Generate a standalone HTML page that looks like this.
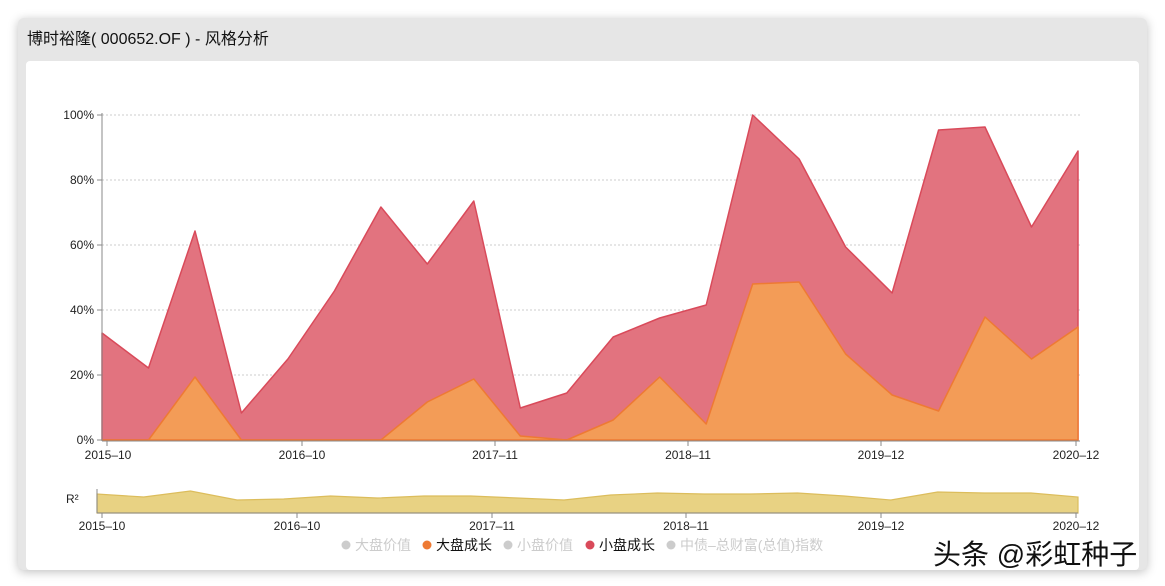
<!DOCTYPE html>
<html><head><meta charset="utf-8"><style>
body{margin:0;width:1165px;height:586px;background:#fff;font-family:"Liberation Sans","Noto Sans CJK SC",sans-serif;overflow:hidden;position:relative}
.win{position:absolute;left:18px;top:18px;width:1129px;height:552px;background:#e6e6e6;border-radius:6px;box-shadow:0 2px 10px rgba(0,0,0,.25)}
.title{position:absolute;left:9px;top:7px;font-size:16px;color:#111}
.card{position:absolute;left:8px;top:43px;width:1113px;height:509px;background:#fff;border-radius:4px}
svg{position:absolute;left:0;top:0}
.wm{position:absolute;left:933px;top:533px;font-size:28px;color:#111;text-shadow:0 0 2px #fff,0 0 3px #fff}
</style></head><body>
<div class="win"><div class="title">博时裕隆( 000652.OF ) - 风格分析</div><div class="card"></div></div>
<svg width="1165" height="586" font-family="Liberation Sans, Noto Sans CJK SC, sans-serif" font-size="12">
<g stroke="#ccc" stroke-dasharray="2,2" stroke-width="1">
<line x1="102" y1="115" x2="1080" y2="115"/><line x1="102" y1="180" x2="1080" y2="180"/><line x1="102" y1="245" x2="1080" y2="245"/><line x1="102" y1="310" x2="1080" y2="310"/><line x1="102" y1="375" x2="1080" y2="375"/>
</g>
<polygon fill="#e2737f" stroke="#d94a5a" stroke-width="1.5" stroke-linejoin="round" points="102,440 102,333 148.5,368 195,231 241.4,413 287.9,359 334.4,291 380.9,207 427.3,264 473.8,201 520.3,408 566.8,393 613.2,337 659.7,318 706.2,305 752.7,115 799.1,159 845.6,247 892.1,293 938.6,130 985,127 1031.5,227 1078,151 1078,440"/>
<polygon fill="#f39c57" stroke="#ee7a33" stroke-width="1.5" stroke-linejoin="round" points="102,440 148.5,440 195,377 241.4,440 287.9,440 334.4,440 380.9,440 427.3,402 473.8,379 520.3,436 566.8,440 613.2,420 659.7,377 706.2,424 752.7,284 799.1,282 845.6,354 892.1,395 938.6,411 985,317 1031.5,359 1078,327 1078,440"/>
<g stroke="#888" stroke-width="1"><line x1="102" y1="113" x2="102" y2="441"/><line x1="102" y1="441" x2="1080" y2="441"/>
<line x1="97" y1="115" x2="102" y2="115"/><line x1="97" y1="180" x2="102" y2="180"/><line x1="97" y1="245" x2="102" y2="245"/><line x1="97" y1="310" x2="102" y2="310"/><line x1="97" y1="375" x2="102" y2="375"/><line x1="97" y1="440" x2="102" y2="440"/>
<line x1="107" y1="441" x2="107" y2="446"/><line x1="302" y1="441" x2="302" y2="446"/><line x1="495" y1="441" x2="495" y2="446"/><line x1="688" y1="441" x2="688" y2="446"/><line x1="881" y1="441" x2="881" y2="446"/><line x1="1076" y1="441" x2="1076" y2="446"/></g>
<g text-anchor="end" fill="#222"><text x="94" y="119">100%</text><text x="94" y="184">80%</text><text x="94" y="249">60%</text><text x="94" y="314">40%</text><text x="94" y="379">20%</text><text x="94" y="444">0%</text></g>
<g text-anchor="middle" fill="#222"><text x="108" y="459">2015–10</text><text x="302" y="459">2016–10</text><text x="495" y="459">2017–11</text><text x="688" y="459">2018–11</text><text x="881" y="459">2019–12</text><text x="1076" y="459">2020–12</text></g>
<polygon fill="#e8d283" stroke="#dcbd5c" stroke-width="1.2" points="97,513 97,494 143.7,497 190.4,491 237.1,500 283.8,499 330.5,496 377.2,498 423.9,496 470.6,496 517.3,498 564,500 610.7,495 657.4,493 704.1,494 750.8,494 797.5,493 844.2,496 890.9,500 937.6,492 984.3,493 1031,493 1078,497 1078,513"/>
<g stroke="#888"><line x1="97" y1="489" x2="97" y2="513"/><line x1="97" y1="513" x2="1078" y2="513"/>
<line x1="102" y1="513" x2="102" y2="518"/><line x1="297" y1="513" x2="297" y2="518"/><line x1="492" y1="513" x2="492" y2="518"/><line x1="686" y1="513" x2="686" y2="518"/><line x1="881" y1="513" x2="881" y2="518"/><line x1="1076" y1="513" x2="1076" y2="518"/></g>
<text x="66" y="503" fill="#222">R²</text>
<g text-anchor="middle" fill="#222"><text x="102" y="530">2015–10</text><text x="297" y="530">2016–10</text><text x="492" y="530">2017–11</text><text x="686" y="530">2018–11</text><text x="881" y="530">2019–12</text><text x="1076" y="530">2020–12</text></g>
<g font-size="14"><circle cx="346" cy="545" r="4.5" fill="#ccc"/><text x="355" y="550" fill="#ccc">大盘价值</text>
<circle cx="427" cy="545" r="4.5" fill="#ee7a33"/><text x="436" y="550" fill="#111">大盘成长</text>
<circle cx="508" cy="545" r="4.5" fill="#ccc"/><text x="517" y="550" fill="#ccc">小盘价值</text>
<circle cx="590" cy="545" r="4.5" fill="#d94a5a"/><text x="599" y="550" fill="#111">小盘成长</text>
<circle cx="671" cy="545" r="4.5" fill="#ccc"/><text x="680" y="550" fill="#ccc">中债–总财富(总值)指数</text></g>
</svg>
<div class="wm">头条 @彩虹种子</div>
</body></html>
